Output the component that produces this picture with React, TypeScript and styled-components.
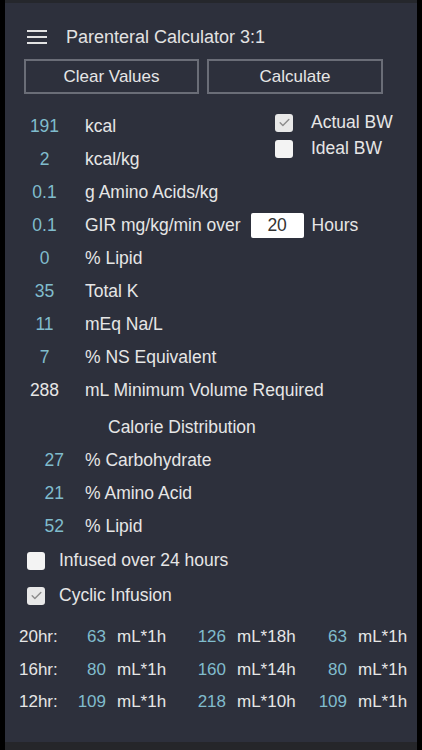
import styled, { createGlobalStyle } from 'styled-components';

const GlobalStyle = createGlobalStyle`
  html, body {
    margin: 0;
    padding: 0;
    background: #000;
  }
  body {
    font-family: "Liberation Sans", Arial, sans-serif;
  }
`;

const Screen = styled.div`
  width: 422px;
  height: 750px;
  padding: 0 5px;
  box-sizing: border-box;
  background: #000;
`;

const Panel = styled.div`
  height: 750px;
  box-sizing: border-box;
  background: #2d303c;
  border-top: 3px solid #25272c;
  border-bottom: 8px solid #25262a;
  padding-top: 20px;
  color: #e6e6e6;
  display: flex;
  flex-direction: column;
`;

const Header = styled.div`
  height: 28px;
  display: flex;
  align-items: center;
  padding-left: 22px;
`;

const Burger = styled.div`
  width: 20px;
  display: flex;
  flex-direction: column;
  gap: 4px;
  span {
    display: block;
    height: 2px;
    background: #e2e2e2;
  }
`;

const Title = styled.div`
  margin-left: 19px;
  font-size: 18px;
  color: #e2e2e2;
`;

const ButtonRow = styled.div`
  margin-top: 8px;
  display: flex;
  gap: 8px;
  padding-left: 19px;
`;

const Button = styled.button<{ $w: number }>`
  width: ${p => p.$w}px;
  height: 35px;
  background: transparent;
  border: 2px solid #6a6d77;
  color: #e6e6e6;
  font-family: inherit;
  font-size: 17px;
  padding: 0;
`;

const TopSection = styled.div`
  margin-top: 16px;
  display: grid;
  grid-template-columns: 270px auto;
`;

const Rows = styled.div`
  display: flex;
  flex-direction: column;
`;

const Row = styled.div`
  height: 33px;
  display: flex;
  align-items: center;
  font-size: 17.5px;
`;

const Num = styled.div<{ $w?: number; $ml?: number; $align?: string; $plain?: boolean }>`
  width: ${p => p.$w || 41}px;
  margin-left: ${p => p.$ml ?? 19}px;
  text-align: ${p => p.$align || 'center'};
  color: ${p => (p.$plain ? '#e6e6e6' : '#80bccd')};
  flex-shrink: 0;
`;

const Label = styled.div<{ $ml?: number }>`
  margin-left: ${p => p.$ml ?? 20}px;
  white-space: nowrap;
`;

const BWChecks = styled.div`
  padding-top: 3.5px;
  display: flex;
  flex-direction: column;
  gap: 8px;
`;

const CheckLine = styled.div`
  display: flex;
  align-items: center;
  font-size: 17.5px;
  height: 18px;
  gap: 18px;
`;

const Box = styled.div<{ $checked?: boolean }>`
  width: 18px;
  height: 18px;
  border-radius: 3px;
  background: ${p => (p.$checked ? '#e8e8e8' : '#f3f3f3')};
  display: flex;
  align-items: center;
  justify-content: center;
  flex-shrink: 0;
`;

const HoursInput = styled.div`
  margin-left: 10px;
  width: 53px;
  height: 25px;
  background: #fff;
  border-radius: 2px;
  color: #333;
  display: flex;
  align-items: center;
  justify-content: center;
  font-size: 17.5px;
`;

const Section = styled.div`
  margin-top: 4px;
  display: flex;
  flex-direction: column;
`;

const SectionTitle = styled.div`
  height: 33px;
  display: flex;
  align-items: center;
  padding-left: 103px;
  font-size: 17.5px;
`;

const CheckRow = styled.div`
  height: 35px;
  display: flex;
  align-items: center;
  padding-left: 22px;
  font-size: 17.5px;
  gap: 14px;
`;

const Table = styled.div`
  margin-top: 8px;
  display: grid;
  grid-template-columns: 52px 35px 75px 45px 76px 45px auto;
  grid-auto-rows: 32.5px;
  align-items: center;
  padding-left: 14px;
  font-size: 17px;
`;

const Cell = styled.div<{ $num?: boolean; $unit?: boolean }>`
  text-align: ${p => (p.$num ? 'right' : 'left')};
  padding-left: ${p => (p.$unit ? 11 : 0)}px;
  color: ${p => (p.$num ? '#80bccd' : '#e6e6e6')};
  white-space: nowrap;
`;

const Check = () => (
  <svg width="13" height="13" viewBox="0 0 24 24" fill="none" stroke="#8c8c8c" strokeWidth="2.6" strokeLinecap="round" strokeLinejoin="round">
    <path d="M4 12.5l5 5L20 6.5" />
  </svg>
);

const lowerRows = [
  { n: '0', l: '% Lipid' },
  { n: '35', l: 'Total K' },
  { n: '11', l: 'mEq Na/L' },
  { n: '7', l: '% NS Equivalent' },
  { n: '288', l: 'mL Minimum Volume Required', plain: true },
];

const distRows = [
  { n: '27', l: '% Carbohydrate' },
  { n: '21', l: '% Amino Acid' },
  { n: '52', l: '% Lipid' },
];

const schedule = [
  { h: '20hr:', a: '63', b: '126', bu: 'mL*18h', c: '63' },
  { h: '16hr:', a: '80', b: '160', bu: 'mL*14h', c: '80' },
  { h: '12hr:', a: '109', b: '218', bu: 'mL*10h', c: '109' },
];

export default function App() {
  return (
    <>
      <GlobalStyle />
      <Screen>
        <Panel>
          <Header>
            <Burger>
              <span />
              <span />
              <span />
            </Burger>
            <Title>Parenteral Calculator 3:1</Title>
          </Header>

          <ButtonRow>
            <Button $w={175}>Clear Values</Button>
            <Button $w={176}>Calculate</Button>
          </ButtonRow>

          <TopSection>
            <Rows>
              <Row>
                <Num>191</Num>
                <Label>kcal</Label>
              </Row>
              <Row>
                <Num>2</Num>
                <Label>kcal/kg</Label>
              </Row>
            </Rows>
            <BWChecks>
              <CheckLine>
                <Box $checked>
                  <Check />
                </Box>
                Actual BW
              </CheckLine>
              <CheckLine>
                <Box />
                Ideal BW
              </CheckLine>
            </BWChecks>
          </TopSection>

          <Rows>
            <Row>
              <Num>0.1</Num>
              <Label>g Amino Acids/kg</Label>
            </Row>
            <Row>
              <Num>0.1</Num>
              <Label>GIR mg/kg/min over</Label>
              <HoursInput>20</HoursInput>
              <Label $ml={8}>Hours</Label>
            </Row>
            {lowerRows.map(r => (
              <Row key={r.l}>
                <Num $plain={r.plain}>{r.n}</Num>
                <Label>{r.l}</Label>
              </Row>
            ))}
          </Rows>

          <Section>
            <SectionTitle>Calorie Distribution</SectionTitle>
            {distRows.map(r => (
              <Row key={r.l}>
                <Num $align="right" $w={40} $ml={19}>{r.n}</Num>
                <Label $ml={21}>{r.l}</Label>
              </Row>
            ))}
          </Section>

          <Rows>
            <CheckRow>
              <Box />
              Infused over 24 hours
            </CheckRow>
            <CheckRow>
              <Box $checked>
                <Check />
              </Box>
              Cyclic Infusion
            </CheckRow>
          </Rows>

          <Table>
            {schedule.map(s => [
              <Cell key={s.h + 'h'}>{s.h}</Cell>,
              <Cell key={s.h + 'a'} $num>{s.a}</Cell>,
              <Cell key={s.h + 'au'} $unit>mL*1h</Cell>,
              <Cell key={s.h + 'b'} $num>{s.b}</Cell>,
              <Cell key={s.h + 'bu'} $unit>{s.bu}</Cell>,
              <Cell key={s.h + 'c'} $num>{s.c}</Cell>,
              <Cell key={s.h + 'cu'} $unit>mL*1h</Cell>,
            ])}
          </Table>
        </Panel>
      </Screen>
    </>
  );
}
